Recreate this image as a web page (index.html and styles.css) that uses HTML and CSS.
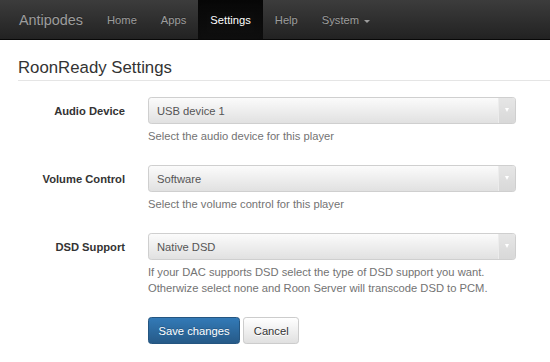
FILE: index.html
```html
<!DOCTYPE html>
<html lang="en">
  <head>
    <meta charset="UTF-8" />
    <meta name="viewport" content="width=device-width, initial-scale=1.0" />
    <title>Antipodes | RoonReady Settings</title>
    <link rel="stylesheet" href="styles.css">
  </head>
  <body>
    <nav class="navbar">
      <a href="#" class="navbar__brand">Antipodes</a>
      <ul class="navbar__links">
        <li><a href="#" class="navbar__link">Home</a></li>
        <li><a href="#" class="navbar__link">Apps</a></li>
        <li><a href="#" class="navbar__link navbar__link--active">Settings</a></li>
        <li><a href="#" class="navbar__link">Help</a></li>
        <li>
          <a href="#" class="navbar__link">System <span class="caret"></span></a>
        </li>
      </ul>
    </nav>

    <main class="page">
      <form class="form">
        <h2 class="legend">RoonReady Settings</h2>

        <div class="form-group">
          <label class="form-label" for="device">Audio Device</label>
          <div class="form-control">
            <div class="select-wrap">
              <select class="select" id="device">
                <option>USB device 1</option>
              </select>
            </div>
            <p class="help">Select the audio device for this player</p>
          </div>
        </div>

        <div class="form-group">
          <label class="form-label" for="volume">Volume Control</label>
          <div class="form-control">
            <div class="select-wrap">
              <select class="select" id="volume">
                <option>Software</option>
              </select>
            </div>
            <p class="help">Select the volume control for this player</p>
          </div>
        </div>

        <div class="form-group">
          <label class="form-label" for="dsd">DSD Support</label>
          <div class="form-control">
            <div class="select-wrap">
              <select class="select" id="dsd">
                <option>Native DSD</option>
              </select>
            </div>
            <p class="help">
              If your DAC supports DSD select the type of DSD support you want.<br />
              Otherwize select none and Roon Server will transcode DSD to PCM.
            </p>
          </div>
        </div>

        <div class="form-group">
          <div class="form-actions">
            <button type="submit" class="btn btn--primary">Save changes</button>
            <button type="button" class="btn btn--default">Cancel</button>
          </div>
        </div>
      </form>
    </main>
  </body>
</html>
```

FILE: styles.css
```css
* {
  margin: 0;
  padding: 0;
  box-sizing: border-box;
}

body {
  color: #333;
  background-color: #fff;
  font-family: "Liberation Sans", Arial, sans-serif;
  font-size: 11.2px;
  line-height: 16px;
}

/* navbar */
.navbar {
  display: flex;
  height: 40px;
  padding-left: 7px;
  background-image: linear-gradient(to bottom, #3c3c3c 0%, #222 100%);
  border-bottom: 1px solid #080808;
}
.navbar__brand {
  padding: 12px;
  font-size: 14.4px;
  line-height: 16px;
  color: #9d9d9d;
  text-decoration: none;
  text-shadow: 0 -1px 0 rgba(0, 0, 0, 0.25);
}
.navbar__links {
  display: flex;
  list-style: none;
}
.navbar__link {
  display: block;
  height: 39px;
  padding: 12px;
  line-height: 16px;
  color: #9d9d9d;
  text-decoration: none;
  text-shadow: 0 -1px 0 rgba(0, 0, 0, 0.25);
}
.navbar__link--active {
  color: #fff;
  background-image: linear-gradient(to bottom, #080808 0%, #0f0f0f 100%);
  box-shadow: inset 0 3px 9px rgba(0, 0, 0, 0.25);
}
.caret {
  display: inline-block;
  width: 0;
  height: 0;
  margin-left: 2px;
  vertical-align: middle;
  border-top: 3.2px solid;
  border-left: 3.2px solid transparent;
  border-right: 3.2px solid transparent;
}

/* form */
.page {
  padding: 16px 0 0 18px;
}
.legend {
  margin-bottom: 16px;
  font-size: 16.8px;
  font-weight: 400;
  line-height: 24px;
  border-bottom: 1px solid #e5e5e5;
}
.form-group {
  display: grid;
  grid-template-columns: 107px 368px;
  column-gap: 23px;
  margin-bottom: 12.8px;
}
.form-label {
  padding-top: 5.6px;
  text-align: right;
  font-weight: 700;
}
.select-wrap {
  position: relative;
}
.select-wrap::after {
  content: "";
  position: absolute;
  top: 1px;
  right: 1px;
  bottom: 1px;
  width: 16px;
  border-left: 1px solid #ececec;
  border-radius: 0 2px 2px 0;
  background-image: linear-gradient(to bottom, #e6e6e6 0%, #d8d8d8 100%);
  pointer-events: none;
}
.select-wrap::before {
  content: "";
  position: absolute;
  top: 11px;
  right: 7px;
  z-index: 1;
  border-top: 4px solid #fff;
  border-left: 2.5px solid transparent;
  border-right: 2.5px solid transparent;
  pointer-events: none;
}
.select {
  display: block;
  width: 100%;
  height: 27.2px;
  padding: 4.8px 8px;
  font: inherit;
  color: #555;
  border: 1px solid #cfcfcf;
  border-radius: 3.2px;
  background-image: linear-gradient(to bottom, #fbfbfb 0%, #e1e1e1 100%);
  -webkit-appearance: none;
  appearance: none;
}
.help {
  margin: 4px 0 8px;
  color: #737373;
}

/* buttons */
.form-actions {
  grid-column: 2;
}
.btn {
  display: inline-block;
  height: 27.2px;
  padding: 4.8px 9.6px;
  font: inherit;
  border: 1px solid transparent;
  border-radius: 3.2px;
  cursor: pointer;
}
.btn--primary {
  color: #fff;
  border-color: #245580;
  background-image: linear-gradient(to bottom, #337ab7 0%, #265a88 100%);
  text-shadow: 0 -1px 0 rgba(0, 0, 0, 0.2);
}
.btn--default {
  color: #333;
  border-color: #ccc;
  background-image: linear-gradient(to bottom, #fff 0%, #e0e0e0 100%);
  text-shadow: 0 1px 0 #fff;
}
```
